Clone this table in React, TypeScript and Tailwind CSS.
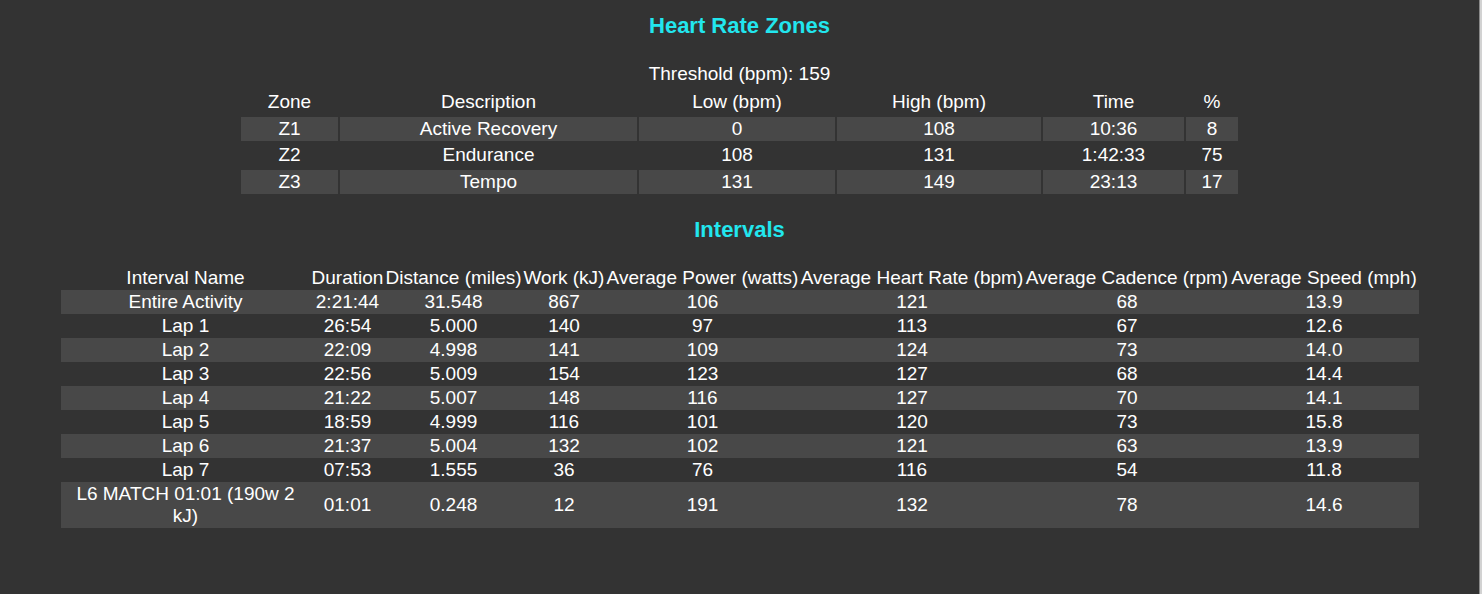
import React from "react";

const zones = [
  ["Z1", "Active Recovery", "0", "108", "10:36", "8"],
  ["Z2", "Endurance", "108", "131", "1:42:33", "75"],
  ["Z3", "Tempo", "131", "149", "23:13", "17"],
];

const zoneWidths = ["w-[97px]", "w-[297px]", "w-[196px]", "w-[204px]", "w-[141px]", "w-[52px]"];

const intervals: (string | React.ReactNode)[][] = [
  ["Entire Activity", "2:21:44", "31.548", "867", "106", "121", "68", "13.9"],
  ["Lap 1", "26:54", "5.000", "140", "97", "113", "67", "12.6"],
  ["Lap 2", "22:09", "4.998", "141", "109", "124", "73", "14.0"],
  ["Lap 3", "22:56", "5.009", "154", "123", "127", "68", "14.4"],
  ["Lap 4", "21:22", "5.007", "148", "116", "127", "70", "14.1"],
  ["Lap 5", "18:59", "4.999", "116", "101", "120", "73", "15.8"],
  ["Lap 6", "21:37", "5.004", "132", "102", "121", "63", "13.9"],
  ["Lap 7", "07:53", "1.555", "36", "76", "116", "54", "11.8"],
  [
    <>
      L6 MATCH 01:01 (190w 2
      <br />
      kJ)
    </>,
    "01:01",
    "0.248",
    "12",
    "191",
    "132",
    "78",
    "14.6",
  ],
];

const intervalHeaders = [
  "Interval Name",
  "Duration",
  "Distance (miles)",
  "Work (kJ)",
  "Average Power (watts)",
  "Average Heart Rate (bpm)",
  "Average Cadence (rpm)",
  "Average Speed (mph)",
];

const intervalWidths = [
  "w-[250px]",
  "w-[74px]",
  "w-[138px]",
  "w-[83px]",
  "w-[194px]",
  "w-[225px]",
  "w-[205px]",
  "w-[189px]",
];

export default function App() {
  return (
    <div
      className="flex h-[594px] w-full bg-[#333333] text-white text-[19px]"
      style={{ fontFamily: '"Liberation Sans", Arial, sans-serif' }}
    >
      <div className="flex flex-1 flex-col items-center">
        <h3 className="mt-[13px] h-[26px] text-[22px] font-bold leading-[26px] text-[#22e6ee]">
          Heart Rate Zones
        </h3>
        <div className="mt-[24px] h-[22px] leading-[22px]">Threshold (bpm): 159</div>
        <table className="mt-[3px] table-fixed border-separate border-spacing-[2px]">
          <thead>
            <tr>
              {["Zone", "Description", "Low (bpm)", "High (bpm)", "Time", "%"].map((h, i) => (
                <th
                  key={h}
                  className={`${zoneWidths[i]} py-px text-center font-normal leading-[22.5px]`}
                >
                  {h}
                </th>
              ))}
            </tr>
          </thead>
          <tbody>
            {zones.map((r, ri) => (
              <tr key={ri} className={ri % 2 === 0 ? "bg-[#484848]" : ""}>
                {r.map((c, ci) => (
                  <td key={ci} className="py-px text-center leading-[22.5px]">
                    {c}
                  </td>
                ))}
              </tr>
            ))}
          </tbody>
        </table>
        <h3 className="mt-[21px] h-[26px] text-[22px] font-bold leading-[26px] text-[#22e6ee]">
          Intervals
        </h3>
        <table className="mt-[23px] w-[1358px] table-fixed border-separate border-spacing-0">
          <thead>
            <tr>
              {intervalHeaders.map((h, i) => (
                <th
                  key={h}
                  className={`${intervalWidths[i]} whitespace-nowrap px-px py-px text-center font-normal leading-[22px]`}
                >
                  {h}
                </th>
              ))}
            </tr>
          </thead>
          <tbody>
            {intervals.map((r, ri) => (
              <tr key={ri} className={ri % 2 === 0 ? "bg-[#484848]" : ""}>
                {r.map((c, ci) => (
                  <td key={ci} className="px-px py-px text-center leading-[22px]">
                    {c}
                  </td>
                ))}
              </tr>
            ))}
          </tbody>
        </table>
      </div>
      <div className="w-[3px] border-l border-[#8a8a8a] bg-[#d2d2d2]" />
    </div>
  );
}
